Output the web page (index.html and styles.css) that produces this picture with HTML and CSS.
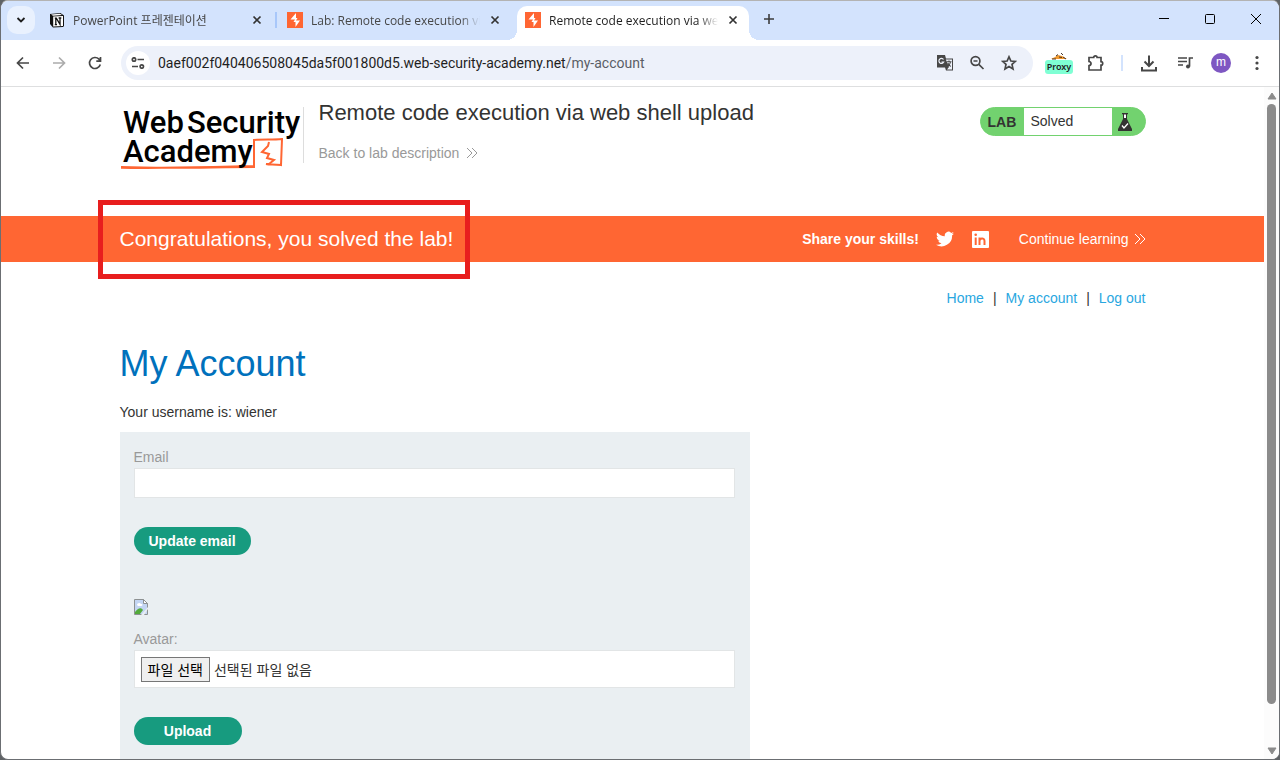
FILE: index.html
```html
<!DOCTYPE html>
<html lang="ko">
<head>
<meta charset="utf-8">
<meta name="viewport" content="width=device-width, initial-scale=1.0">
<title>Remote code execution via web shell upload</title>
<link rel="stylesheet" href="styles.css">
</head>
<body>
<div class="window">
    <div class="tabstrip">
        <button class="tab-search" aria-label="Search tabs">
            <svg width="10" height="8" viewBox="0 0 10 8"><path d="M1.5 2l3.5 3.5L8.5 2" fill="none" stroke="#1f1f1f" stroke-width="1.8"/></svg>
        </button>
        <div class="tab">
            <svg class="favicon" viewBox="0 0 16 16"><path d="M1 2l10.500-1L15 3.500V14l-1 1-10 .5L1 12z" fill="#111"/><path d="M2 2.500l9-.7 2 1.300-9 .6z" fill="#fff"/><path d="M4.200 4.500L14 4v10l-9.800.6z" fill="#fff"/><path d="M6.800 6.200v6.500M5.800 12.700h2.200M9.600 6h2.700M5.800 6.200h1.500l3.700 6.200V6" fill="none" stroke="#111" stroke-width="1.300"/></svg>
            <span class="tab-title">PowerPoint 프레젠테이션</span>
            <button class="tab-close" aria-label="Close"><svg width="10" height="10" viewBox="0 0 10 10"><path d="M1.5 1.5l7 7M8.5 1.5l-7 7"/></svg></button>
        </div>
        <span class="tab-divider"></span>
        <div class="tab">
            <svg class="favicon" viewBox="0 0 16 16"><path d="M0 0h16v16H0z" fill="#ff6633"/><path d="M9 1L3.500 7.500H8L6.500 10H8.500v5l4.500-6.500H9L10.500 6H9z" fill="#fff"/></svg>
            <span class="tab-title">Lab: Remote code execution vi</span>
            <button class="tab-close" aria-label="Close"><svg width="10" height="10" viewBox="0 0 10 10"><path d="M1.5 1.5l7 7M8.5 1.5l-7 7"/></svg></button>
        </div>
        <span class="tab-divider hidden"></span>
        <div class="tab active">
            <svg class="favicon" viewBox="0 0 16 16"><path d="M0 0h16v16H0z" fill="#ff6633"/><path d="M9 1L3.500 7.500H8L6.500 10H8.500v5l4.500-6.500H9L10.500 6H9z" fill="#fff"/></svg>
            <span class="tab-title">Remote code execution via we</span>
            <button class="tab-close" aria-label="Close"><svg width="10" height="10" viewBox="0 0 10 10"><path d="M1.5 1.5l7 7M8.5 1.5l-7 7"/></svg></button>
        </div>
        <button class="new-tab" aria-label="New tab"><svg width="12" height="12" viewBox="0 0 12 12"><path d="M6 1v10M1 6h10" stroke="#3c3c3c" stroke-width="1.600"/></svg></button>
        <div class="window-controls">
            <button aria-label="Minimize"><svg width="12" height="12" viewBox="0 0 12 12"><path d="M1 5.500h10"/></svg></button>
            <button aria-label="Maximize"><svg width="12" height="12" viewBox="0 0 12 12"><rect x="1.500" y="1.500" width="9" height="9" rx="1"/></svg></button>
            <button aria-label="Close window"><svg width="12" height="12" viewBox="0 0 12 12"><path d="M1 1l10 10M11 1L1 11"/></svg></button>
        </div>
    </div>

    <div class="toolbar">
        <button class="tool" aria-label="Back"><svg width="14" height="14" viewBox="0 0 14 14"><path d="M13 7H2M7 1.500L1.500 7 7 12.500"/></svg></button>
        <button class="tool off" aria-label="Forward"><svg width="14" height="14" viewBox="0 0 14 14"><path d="M1 7h11M7 1.500L12.500 7 7 12.500"/></svg></button>
        <button class="tool" aria-label="Reload"><svg width="14" height="14" viewBox="0 0 14 14"><path d="M12.300 8.500A5.500 5.500 0 1 1 11 3.200L12.500 5M12.500 1v4.200H8.300"/></svg></button>
        <div class="omnibox">
            <button class="site-info" aria-label="Site information"><svg width="14" height="12" viewBox="0 0 14 12"><path d="M6.500 2.500H13M1 9.500h6"/><circle cx="3" cy="2.500" r="1.700"/><circle cx="10.800" cy="9.500" r="1.700"/></svg></button>
            <div class="url">0aef002f040406508045da5f001800d5.web-security-academy.net<span>/my-account</span></div>
            <button class="omni-icon" aria-label="Translate"><svg width="18" height="18" viewBox="0 0 18 18"><path d="M1 1h8l1 3.500h7v12H10l-1-3H1z" fill="#474747" stroke="none"/><path d="M9.800 5.500h6.200v10h-5l2-2.500z" fill="#edf1fa" stroke="none"/><path d="M7.500 5.500A2.500 2.500 0 1 0 7.700 8H5.500" stroke="#edf1fa" stroke-width="1.200"/><path d="M10.500 7.800h5M13 6.500v1.300M14.500 8c-.4 1.800-1.300 3-2.400 4M11.800 9c.6 1.500 1.500 2.600 2.900 3.500" stroke-width="1.100"/></svg></button>
            <button class="omni-icon" aria-label="Zoom"><svg width="16" height="16" viewBox="0 0 16 16"><circle cx="6.500" cy="6" r="4.400"/><path d="M9.800 9.300l4.700 4.700M4.500 6h4"/></svg></button>
            <button class="omni-icon" aria-label="Bookmark"><svg width="16" height="16" viewBox="0 0 16 16"><path d="M8 1.800l1.900 4.200 4.500.4-3.400 3 1 4.500L8 11.500l-4 2.400 1-4.500-3.400-3 4.500-.4z"/></svg></button>
        </div>
        <button class="tool proxy" aria-label="Proxy">
            <svg width="16" height="8" viewBox="0 0 16 8"><path d="M0 7l4-2 3-2 4 1 5 3z" fill="#f39a2e" stroke="none"/><path d="M5 4l2-1.500M8 5l3 .5M10 1l2 2M1 7h4M12 5l3 2" stroke="#49352a" stroke-width="1"/></svg>
            <span>Proxy</span>
        </button>
        <button class="tool" aria-label="Extensions"><svg width="18" height="18" viewBox="0 0 18 18"><path d="M3 3.500h4.700a1.700 1.700 0 0 1 3.400 0H15v4.200a1.700 1.700 0 0 1 0 3.400V16H3v-4.300c2.700-.3 2.700-3.900 0-4.200z"/></svg></button>
        <span class="tool-divider"></span>
        <button class="tool" aria-label="Downloads"><svg width="18" height="18" viewBox="0 0 18 18"><path d="M9 1.500v10M4.500 7.500L9 12l4.500-4.500M2 13v3.500h14V13" stroke-width="2"/></svg></button>
        <button class="tool" aria-label="Media"><svg width="18" height="16" viewBox="0 0 18 16"><path d="M2 3h9M2 6.500h9M2 10h5M13.500 11.500V3H17"/><circle cx="12" cy="11.500" r="2" fill="#474747" stroke="none"/></svg></button>
        <button class="tool" aria-label="Profile"><span class="avatar">m</span></button>
        <button class="tool" aria-label="Menu"><svg width="4" height="16" viewBox="0 0 4 16"><g fill="#474747" stroke="none"><circle cx="2" cy="2.500" r="1.600"/><circle cx="2" cy="8" r="1.600"/><circle cx="2" cy="13.500" r="1.600"/></g></svg></button>
    </div>

    <div class="viewport">
        <div class="page">
            <header class="container lab-header">
                <svg class="logo" width="183" height="76" viewBox="0 0 183 76" role="img" aria-label="Web Security Academy">
                    <path d="M1 71c40 0 90-1 133-2V43c10-1 18 0 28-1l-1 26c-8-1-11 0-15-1M1 70c50 2 90 0 134 0" fill="none" stroke="#ff6633" stroke-width="2"/>
                    <path d="M149 45l-1 4-6 6 7 2-2 4 7 2-5 4h-3" fill="none" stroke="#ff6633" stroke-width="2"/>
                    <text x="3" y="36">Web</text>
                    <text x="67" y="36">Security</text>
                    <text x="3" y="65">Academy</text>
                </svg>
                <div class="title">
                    <h2>Remote code execution via web shell upload</h2>
                    <a href="#">Back to lab description <svg width="12" height="12" viewBox="0 0 12 12"><path d="M1 1l5 5-5 5M6 1l5 5-5 5"/></svg></a>
                </div>
                <div class="lab-status">
                    <b>LAB</b>
                    <span>Solved</span>
                    <svg width="16" height="20" viewBox="0 0 16 20"><path d="M5 1h6v1l-1 .5V7l5 10v2H1v-2L6 7V2.500L5 2z" fill="#333332"/><path d="M7 2.500h2v3.500H7z" fill="#fff"/><path d="M5 13.500L7 16l4-4.500" fill="none" stroke="#fff" stroke-width="1.300"/></svg>
                </div>
            </header>

            <section class="banner">
                <div class="container banner-inner">
                    <div class="marker"></div>
                    <h4>Congratulations, you solved the lab!</h4>
                    <b>Share your skills!</b>
                    <a class="social" href="#" aria-label="Twitter"><svg width="18" height="18" viewBox="0 0 24 24"><path fill="#fff" d="M24 4.600a10 10 0 0 1-2.800.8 5 5 0 0 0 2.100-2.700 10 10 0 0 1-3.100 1.200 4.900 4.900 0 0 0-8.400 4.500A14 14 0 0 1 1.700 3.200a4.900 4.900 0 0 0 1.500 6.500A5 5 0 0 1 1 9.100a4.900 4.900 0 0 0 3.900 4.900 5 5 0 0 1-2.200.1 4.900 4.900 0 0 0 4.600 3.400A10 10 0 0 1 0 19.500a14 14 0 0 0 21.500-12.400A10 10 0 0 0 24 4.600z"/></svg></a>
                    <a class="social" href="#" aria-label="LinkedIn"><svg width="18" height="18" viewBox="0 0 18 18"><rect x="1" y="1" width="17" height="17" rx="1" fill="#fff"/><path d="M4.700 7.500v7.500M8.500 7.500v7.500M8.500 11c0-3 5-3.500 5 0v4" fill="none" stroke="#ff6633" stroke-width="2"/><circle cx="4.700" cy="4.700" r="1.300" fill="#ff6633"/></svg></a>
                    <a class="continue" href="#">Continue learning <svg width="12" height="12" viewBox="0 0 12 12"><path d="M1 1l5 5-5 5M6 1l5 5-5 5"/></svg></a>
                </div>
            </section>

            <main class="container">
                <nav class="links">
                    <a href="#">Home</a><i>|</i><a href="#">My account</a><i>|</i><a href="#">Log out</a>
                </nav>
                <h1>My Account</h1>
                <p>Your username is: wiener</p>
                <div class="account">
                    <form>
                        <label for="email">Email</label>
                        <input class="text" type="email" id="email">
                        <button class="button" type="button">Update email</button>
                    </form>
                    <form>
                        <svg class="broken" width="14" height="16" viewBox="0 0 14 16"><path d="M.5.500h9l4 4v11H.5z" fill="#c3d5f3" stroke="#8d9192"/><path d="M9.500.5v4h4z" fill="#fff" stroke="#8d9192"/><path d="M3 6c0-2 3-3 4-1 2-.5 2 2 0 2H4z" fill="#fff"/><path d="M1 15v-2c3-4 6-5 8-2l-3 4z" fill="#54ab3c"/><path d="M7 16l7-8v2l-4 6z" fill="#eaeff2"/></svg>
                        <label for="avatar">Avatar:</label>
                        <div class="file">
                            <input type="file" id="avatar">
                            <label class="file-button" for="avatar">파일 선택</label>
                            <span>선택된 파일 없음</span>
                        </div>
                        <button class="button wide" type="button">Upload</button>
                    </form>
                </div>
            </main>
        </div>
        <div class="scrollbar">
            <svg width="10" height="8" viewBox="0 0 10 8"><path d="M5 1l4 6H1z"/></svg>
            <div class="thumb"></div>
            <svg width="10" height="8" viewBox="0 0 10 8"><path d="M5 7l4-6H1z"/></svg>
        </div>
    </div>
</div>
</body>
</html>
```
FILE: styles.css
```css
* {
    box-sizing: border-box;
}

body {
    margin: 0;
    background: #5f6366;
    color: #333332;
    font-family: "Liberation Sans", Arial, "Noto Sans CJK KR", sans-serif;
    font-size: 14px;
}

button {
    border: 0;
    padding: 0;
    background: none;
    font-family: inherit;
}

a {
    text-decoration: none;
}

h1, h2, h4, p {
    margin: 0;
    font-weight: normal;
}

.window {
    display: flex;
    flex-direction: column;
    height: 100vh;
    overflow: hidden;
    border: 1px solid #6b6e72;
    border-top-color: #b3b3b3;
    border-radius: 8px;
    background: #fff;
}

/* tabs */

.tabstrip {
    display: flex;
    height: 39px;
    flex-shrink: 0;
    padding: 5px 0 0 6px;
    background: #d3e3fd;
    font-family: "Open Sans", "Noto Sans CJK KR", sans-serif;
    font-size: 12px;
}

.tab-search {
    display: flex;
    align-items: center;
    justify-content: center;
    width: 28px;
    height: 28px;
    margin-right: 6px;
    border-radius: 10px;
    background: #e9f1fe;
}

.tab {
    display: flex;
    align-items: center;
    width: 232px;
    height: 34px;
    padding: 0 8px 6px;
    color: #474747;
}

.tab.active {
    position: relative;
    border-radius: 10px 10px 0 0;
    background: #fff;
    color: #1f1f1f;
}

.tab.active::before,
.tab.active::after {
    content: "";
    position: absolute;
    bottom: 0;
    width: 10px;
    height: 10px;
}

.tab.active::before {
    right: 100%;
    background: radial-gradient(circle at 0 0, #d3e3fd 10px, #fff 10px);
}

.tab.active::after {
    left: 100%;
    background: radial-gradient(circle at 100% 0, #d3e3fd 10px, #fff 10px);
}

.favicon {
    width: 16px;
    height: 16px;
    flex-shrink: 0;
    margin-right: 8px;
}

.tab-title {
    flex: 1;
    overflow: hidden;
    white-space: nowrap;
    mask-image: linear-gradient(to left, transparent, #000 20px);
}

.tab-close {
    display: flex;
    justify-content: center;
    width: 16px;
    margin-left: 7px;
}

.tab-close path {
    stroke: #333;
    stroke-width: 1.7;
}

.tab-divider {
    width: 2px;
    height: 16px;
    margin: 6px 2px;
    background: #a8c7fa;
}

.tab-divider.hidden {
    visibility: hidden;
}

.new-tab {
    width: 28px;
    height: 28px;
    margin-left: 6px;
}

.window-controls {
    display: flex;
    height: 28px;
    margin-left: auto;
}

.window-controls button {
    width: 46px;
}

.window-controls svg {
    fill: none;
    stroke: #000;
}

/* toolbar */

.toolbar {
    display: flex;
    align-items: center;
    height: 47px;
    flex-shrink: 0;
    padding: 0 4px;
    border-bottom: 1px solid #dedfe0;
    background: #fff;
}

.tool {
    display: flex;
    align-items: center;
    justify-content: center;
    width: 36px;
    height: 34px;
}

.toolbar svg {
    fill: none;
    stroke: #474747;
    stroke-width: 1.7;
}

.off {
    opacity: 0.45;
}

.omnibox {
    display: flex;
    flex: 1;
    align-items: center;
    height: 34px;
    margin: 0 8px;
    padding: 0 8px 0 5px;
    border-radius: 17px;
    background: #edf1fa;
}

.site-info {
    display: flex;
    align-items: center;
    justify-content: center;
    width: 24px;
    height: 24px;
    border-radius: 12px;
    background: #fff;
}

.url {
    flex: 1;
    margin-left: 8px;
    overflow: hidden;
    white-space: nowrap;
    color: #1f1f1f;
    font-family: Roboto, sans-serif;
    font-size: 14px;
}

.url span {
    color: #5a5e66;
}

.omni-icon {
    display: flex;
    align-items: center;
    justify-content: center;
    width: 32px;
    height: 32px;
}

.proxy {
    flex-direction: column;
}

.proxy span {
    width: 28px;
    height: 14px;
    border-radius: 3px;
    background: #7fffd4;
    color: #222;
    font-family: "Noto Sans", sans-serif;
    font-size: 9px;
    font-weight: 600;
    line-height: 14px;
}

.tool-divider {
    width: 2px;
    height: 16px;
    margin: 0 8px;
    background: #d3e3fd;
}

.avatar {
    width: 20px;
    height: 20px;
    border-radius: 10px;
    background: #7e57c2;
    color: #fff;
    font-size: 12px;
    line-height: 19px;
}

/* page */

.viewport {
    display: flex;
    flex: 1;
    min-height: 0;
}

.page {
    flex: 1;
    overflow: hidden;
}

.container {
    max-width: 1028px;
    margin: 0 auto;
    padding: 0 1px;
}

.lab-header {
    display: flex;
    align-items: flex-start;
    height: 129px;
    padding-top: 10px;
}

.logo {
    flex-shrink: 0;
    height: 76px;
}

.logo text {
    font-family: Roboto, sans-serif;
    font-size: 31px;
    font-weight: 500;
    fill: #000;
}

.title {
    height: 56px;
    margin-top: 10px;
    padding-left: 15px;
    border-left: 1px solid #ddd;
}

.title h2 {
    margin-top: -7px;
    font-size: 22px;
    line-height: 26px;
}

.title a {
    display: block;
    margin-top: 19px;
    color: #999;
    line-height: 17px;
}

.title svg,
.continue svg {
    margin-left: 3px;
    fill: none;
    stroke: currentColor;
    vertical-align: -1px;
}

.continue svg {
    margin-left: 1px;
}

.lab-status {
    display: flex;
    align-items: center;
    width: 166px;
    height: 29px;
    margin: 10px 0 0 auto;
    border: 1px solid #72d26f;
    border-radius: 15px;
    background: #72d26f;
    overflow: hidden;
}

.lab-status b {
    width: 43px;
    padding-left: 7px;
}

.lab-status span {
    width: 88px;
    margin-right: 5px;
    padding-left: 7px;
    background: #fff;
    line-height: 27px;
}

.banner {
    background: #ff6633;
    color: #fff;
}

.banner-inner {
    position: relative;
    display: flex;
    align-items: center;
    height: 46px;
}

.banner h4 {
    margin-right: auto;
    font-size: 21px;
}

.social {
    height: 18px;
    margin-left: 17px;
}

.continue {
    margin-left: 30px;
    color: #fff;
}

.marker {
    position: absolute;
    top: -16px;
    left: -21px;
    width: 372px;
    height: 79px;
    border: 5px solid #e81e1e;
}

.links {
    padding-top: 27px;
    text-align: right;
    line-height: 18px;
}

.links a {
    color: #29a7df;
}

.links i {
    margin: 0 9px;
    font-style: normal;
}

h1 {
    margin-top: 36px;
    color: #0071bc;
    font-size: 36px;
    line-height: 42px;
}

p {
    margin: 18px 0 11px;
    line-height: 18px;
}

.account {
    max-width: 630px;
    padding: 16px 15px 44px 14px;
    background: #eaeff2;
}

.account form {
    margin-bottom: 44px;
}

.account label {
    display: block;
    color: #999;
    line-height: 18px;
}

.text {
    display: block;
    width: 100%;
    height: 30px;
    margin-top: 2px;
    border: 1px solid #e2e5e6;
    background: #fff;
}

.button {
    height: 28px;
    margin-top: 29px;
    padding: 0 15px;
    border-radius: 14px;
    background: #179b7f;
    color: #fff;
    font-size: 14px;
    font-weight: bold;
}

.wide {
    min-width: 108px;
}

.broken {
    display: block;
    margin-bottom: 15px;
}

.file {
    display: flex;
    align-items: center;
    height: 38px;
    margin-top: 2px;
    padding-left: 6px;
    border: 1px solid #e2e5e6;
    background: #fff;
    font-family: "Noto Sans CJK KR", sans-serif;
}

.file input {
    position: absolute;
    width: 1px;
    height: 1px;
    opacity: 0;
}

.account .file-button {
    margin-right: 4px;
    padding: 2px 6px;
    border: 1px solid #767676;
    background: #efefef;
    color: #000;
    line-height: 19px;
}

.scrollbar {
    display: flex;
    flex-direction: column;
    align-items: center;
    width: 15px;
    padding: 5px 0 4px;
    background: #fcfcfc;
}

.scrollbar svg {
    fill: #8b8b8b;
}

.scrollbar svg path {
    stroke: #8b8b8b;
    stroke-linejoin: round;
}

.scrollbar .thumb {
    flex: 0 1 600px;
    width: 9px;
    margin: 4px 0 auto;
    border-radius: 5px;
    background: #8b8b8b;
}
```
